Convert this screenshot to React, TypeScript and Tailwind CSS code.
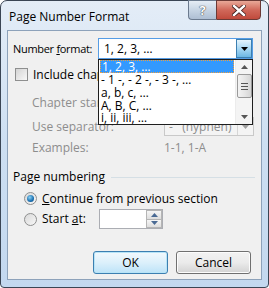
import React from "react";

const font = { fontFamily: '"Open Sans", "Noto Sans", sans-serif' };

function Radio({ checked }: { checked?: boolean }) {
  return (
    <span className="relative w-[13px] h-[13px] shrink-0 rounded-full border border-[#8e8f8f] bg-gradient-to-br from-[#d9d9d9] to-[#f7f7f7] flex items-center justify-center">
      {checked && (
        <span className="w-[7px] h-[7px] rounded-full bg-[radial-gradient(circle_at_40%_35%,#8ad2f5,#1a6fb0_60%,#0d4a80)]" />
      )}
    </span>
  );
}

function Arrow({ up, color = "#444" }: { up?: boolean; color?: string }) {
  return (
    <svg width="7" height="4" viewBox="0 0 7 4">
      <path d={up ? "M0 4 L3.5 0 L7 4 Z" : "M0 0 L7 0 L3.5 4 Z"} fill={color} />
    </svg>
  );
}

export default function App() {
  return (
    <div className="w-[269px] h-[288px] bg-white text-[12px] leading-none whitespace-nowrap" style={font}>
      <div className="w-[269px] h-[288px] rounded-t-[7px] rounded-b-[4px] border border-[#3a4554] bg-gradient-to-b from-[#e4edf7] via-[#cddff2] to-[#c3d8ef] flex flex-col px-[6px] pb-[7px]">
        {/* title bar */}
        <div className="h-[29px] flex items-start justify-between">
          <span className="mt-[10px] ml-[2px] text-black">Page Number Format</span>
          <div className="flex mr-[1px] -mt-px">
            <div className="w-[28px] h-[20px] rounded-bl-[4px] border border-[#6b7a8e] border-r-0 bg-gradient-to-b from-[#e6edf5] via-[#c7d5e4] to-[#aebed3] flex items-center justify-center text-white font-bold text-[13px] [text-shadow:0_0_1px_#333,0_0_1px_#333]">
              ?
            </div>
            <div className="w-[45px] h-[20px] rounded-br-[4px] border border-[#6b3a36] bg-gradient-to-b from-[#e8a898] via-[#d0685a] to-[#c04a3c] flex items-center justify-center">
              <svg width="14" height="11" viewBox="0 0 14 11">
                <path d="M2 1 L12 10 M12 1 L2 10" stroke="#3d1d1a" strokeWidth="4" strokeLinecap="square" />
                <path d="M2 1 L12 10 M12 1 L2 10" stroke="#fff" strokeWidth="2.4" strokeLinecap="square" />
              </svg>
            </div>
          </div>
        </div>

        {/* client area */}
        <div className="relative flex-1 border border-[#8da2ba] bg-[#f0f0f0] text-black">
          <div className="flex flex-col px-[5px]">
            {/* Number format */}
            <div className="h-[21px] mt-[7px] flex items-center">
              <span className="w-[85px] shrink-0 text-[11px] tracking-[-0.3px]">
                Number <u>f</u>ormat:
              </span>
              <div className="w-[155px] h-[21px] shrink-0 border border-[#569de5] bg-white flex items-center">
                <span className="flex-1 pl-[5px]">1, 2, 3, …</span>
                <div className="w-[16px] h-[19px] border border-[#3c7fb1] bg-gradient-to-b from-[#e5f4fc] via-[#a9d8f3] to-[#6cb6e3] flex items-center justify-center">
                  <Arrow color="#000" />
                </div>
              </div>
            </div>

            {/* include chapter (partly hidden by the open list) */}
            <div className="h-[13px] mt-[9px] ml-[2px] flex items-center gap-[5px]">
              <span className="w-[13px] h-[13px] shrink-0 border border-[#8e8f8f] bg-gradient-to-br from-[#d4d4d4] to-[#f8f8f8]" />
              <span className="w-[65px] overflow-hidden">Include chapter number</span>
            </div>

            <div className="h-[16px] mt-[14px] ml-[19px] flex items-center text-[#8d8d8d]">
              <span className="w-[66px] overflow-hidden">Chapter starts with style:</span>
            </div>

            <div className="h-[19px] mt-[6px] ml-[19px] flex items-center text-[#8d8d8d]">
              <span className="w-[132px] shrink-0">Use separator:</span>
              <div className="w-[90px] h-[19px] shrink-0 border border-[#c9c9c9] bg-[#f4f4f4] flex items-center">
                <span className="flex-1 pl-[4px]">-&nbsp;&nbsp;&nbsp;(hyphen)</span>
                <div className="w-[16px] h-[17px] border-l border-[#d6d6d6] flex items-center justify-center">
                  <Arrow color="#a0a0a0" />
                </div>
              </div>
            </div>

            <div className="h-[16px] mt-[4px] ml-[19px] flex items-center text-[#8d8d8d]">
              <span className="w-[132px] shrink-0">Examples:</span>
              <span>1-1, 1-A</span>
            </div>

            {/* Page numbering */}
            <div className="h-[16px] mt-[13px] flex items-center gap-[6px]">
              <span>Page numbering</span>
              <span className="flex-1 h-px bg-[#d5dfe5] mr-[1px]" />
            </div>

            <div className="h-[15px] mt-[6px] ml-[11px] flex items-center gap-[5px]">
              <Radio checked />
              <span>
                <u>C</u>ontinue from previous section
              </span>
            </div>

            <div className="h-[20px] mt-[3px] ml-[11px] flex items-center gap-[5px]">
              <Radio />
              <span className="w-[52px] shrink-0">
                Start <u>a</u>t:
              </span>
              <div className="w-[64px] h-[20px] shrink-0 border border-[#abadb3] bg-white flex justify-end">
                <div className="w-[16px] flex flex-col">
                  <div className="flex-1 border border-[#b5b5b5] bg-gradient-to-b from-[#f6f6f6] to-[#dedede] flex items-center justify-center">
                    <Arrow up color="#4a6a94" />
                  </div>
                  <div className="flex-1 border border-t-0 border-[#b5b5b5] bg-gradient-to-b from-[#f6f6f6] to-[#dedede] flex items-center justify-center">
                    <Arrow color="#4a6a94" />
                  </div>
                </div>
              </div>
            </div>

            {/* buttons */}
            <div className="h-[23px] mt-[22px] flex justify-end gap-[8px] pr-[5px]">
              <button className="w-[75px] h-[23px] rounded-[3px] border border-[#3c7fb1] bg-gradient-to-b from-[#f2f9fd] via-[#dcf0fb] to-[#bde3f8] shadow-[inset_0_0_0_1px_#b7e4f7] text-black">
                OK
              </button>
              <button className="w-[75px] h-[23px] rounded-[3px] border border-[#707070] bg-gradient-to-b from-[#f2f2f2] via-[#ebebeb] to-[#d3d3d3] shadow-[inset_0_0_0_1px_#fcfcfc] text-black">
                Cancel
              </button>
            </div>
          </div>

          {/* open dropdown list */}
          <div className="absolute left-[90px] top-[28px] w-[155px] h-[66px] border border-[#1e1e1e] bg-white flex overflow-hidden">
            <div className="flex-1 flex flex-col">
              <div className="h-[13px] shrink-0 mx-px bg-[#3399ff] text-white border border-dotted border-[#f0a040] pl-px flex items-center">
                1, 2, 3, …
              </div>
              <div className="h-[13px] shrink-0 pl-[2px] flex items-center">- 1 -, - 2 -, - 3 -, …</div>
              <div className="h-[13px] shrink-0 pl-[2px] flex items-center">a, b, c, …</div>
              <div className="h-[13px] shrink-0 pl-[2px] flex items-center">A, B, C, …</div>
              <div className="h-[12px] shrink-0 pl-[2px] flex items-center">i, ii, iii, …</div>
            </div>
            <div className="w-[17px] bg-[#f4f4f4] border-l border-[#ececec] flex flex-col items-center">
              <div className="h-[14px] flex items-center justify-center">
                <Arrow up color="#555" />
              </div>
              <div className="w-[15px] h-[24px] rounded-[2px] border border-[#9a9a9a] bg-gradient-to-r from-[#f3f3f3] via-[#e6e6e6] to-[#d5d5d5] flex flex-col items-center justify-center gap-[2px]">
                <span className="w-[7px] h-px bg-[#555]" />
                <span className="w-[7px] h-px bg-[#555]" />
                <span className="w-[7px] h-px bg-[#555]" />
              </div>
              <div className="flex-1 flex items-end justify-center pb-[5px]">
                <Arrow color="#555" />
              </div>
            </div>
          </div>
        </div>
      </div>
    </div>
  );
}
